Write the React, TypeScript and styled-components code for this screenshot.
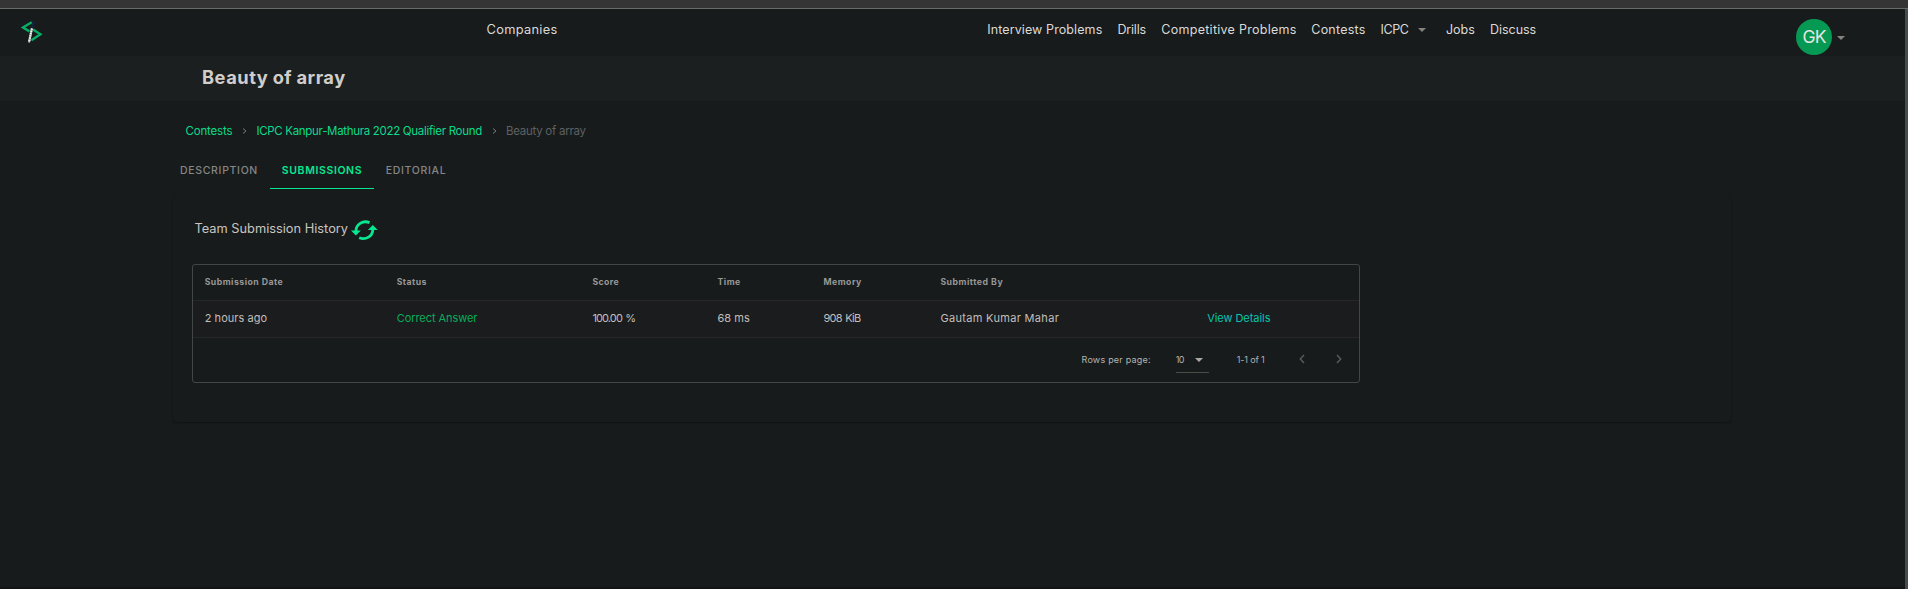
import React from 'react';
import styled, { createGlobalStyle } from 'styled-components';

const GlobalStyle = createGlobalStyle`
  *, *::before, *::after { box-sizing: border-box; }
  body {
    margin: 0;
    background: #171b1c;
    color: #c9c6c2;
    font-family: Inter, "Open Sans", sans-serif;
    overflow: hidden;
  }
`;

const Page = styled.div`
  height: 589px;
  display: grid;
  grid-template-columns: 1905px 3px;
  grid-template-rows: 9px 1fr 2px;
`;

const WindowEdge = styled.div`
  grid-column: 1 / -1;
  background: #353535;
  border-bottom: 1px solid #696b69;
`;

const BottomEdge = styled.div`
  grid-column: 1 / 2;
  background: #121516;
`;

const Scrollbar = styled.div`
  grid-row: 2 / 4;
  grid-column: 2;
  background: #474b4f;
`;

const Main = styled.main`
  min-width: 0;
`;

const Header = styled.header`
  height: 47px;
  display: flex;
  align-items: flex-start;
  padding-left: 20px;
`;

const Logo = styled.svg`
  margin-top: 11px;
  flex: none;
`;

const Label = styled.span<{ $ls?: number }>`
  letter-spacing: ${p => p.$ls ?? 0}px;
  white-space: nowrap;
`;

const NavSlot = styled.div<{ $width: number }>`
  flex: none;
  width: ${p => p.$width}px;
  display: flex;
  align-items: center;
  height: 41px;
  font-size: 12.5px;
  color: #dcdad6;
`;

const CompaniesSlot = styled(NavSlot)`
  padding-left: 442.5px;
  font-size: 12.8px;
`;

const Nav = styled.nav`
  display: flex;
  flex: none;
`;

const Caret = styled.i<{ $gap: number; $color?: string }>`
  margin-left: ${p => p.$gap}px;
  margin-top: 1px;
  border: 4px solid transparent;
  border-top-color: ${p => p.$color ?? '#84827e'};
  border-bottom: 0;
`;

const Account = styled.div`
  display: flex;
  align-items: center;
  margin-top: 10px;
`;

const Avatar = styled.div`
  width: 36px;
  height: 36px;
  padding-bottom: 1px;
  border-radius: 50%;
  background: #069953;
  color: #e4e6e2;
  font-size: 17.5px;
  font-weight: 400;
  display: flex;
  align-items: center;
  justify-content: center;
`;

const TitleBar = styled.div`
  height: 45px;
  padding: 0 0 4px 202px;
  background: #1b1f20;
  display: flex;
  align-items: center;
`;

const Title = styled.h1`
  margin: 0;
  font-size: 18.3px;
  line-height: 22px;
  font-weight: 700;
  letter-spacing: 0.52px;
  word-spacing: -0.6px;
  color: #d0cdca;
`;

const Breadcrumb = styled.div`
  height: 20px;
  margin-top: 20px;
  padding-left: 185.5px;
  display: flex;
  align-items: center;
  font-size: 11.5px;
  color: #5f6262;
`;

const Crumb = styled.a<{ $ls: number }>`
  color: #0bdb8c;
  letter-spacing: ${p => p.$ls}px;
`;

const CrumbArrow = styled.svg`
  margin: 0 9px 0 10px;
`;

const Tabs = styled.div`
  display: flex;
  height: 38px;
  margin: 10px 0 0 168px;
`;

const Tab = styled.div<{ $width: number; $active?: boolean }>`
  width: ${p => p.$width}px;
  height: 38px;
  padding-top: 2px;
  display: flex;
  align-items: center;
  justify-content: center;
  font-size: 10.5px;
  font-weight: ${p => (p.$active ? 600 : 500)};
  letter-spacing: ${p => (p.$active ? 0.62 : 0.68)}px;
  color: ${p => (p.$active ? '#07e791' : '#858686')};
  border-bottom: 1px solid ${p => (p.$active ? '#07e791' : 'transparent')};
`;

const Card = styled.section`
  width: 1558px;
  height: 226px;
  margin: 7px 0 0 173px;
  padding: 22px 0 0 19px;
  border-radius: 4px;
  background: #171b1c;
  box-shadow: 0 1px 2px rgba(0, 0, 0, 0.35);
`;

const CardTitle = styled.div`
  display: flex;
  align-items: center;
  height: 24px;
  padding-left: 2.5px;
  margin-bottom: 22px;
  font-size: 12.8px;
`;

const CardTitleText = styled(Label)`
  padding-bottom: 3px;
`;

const Refresh = styled.svg`
  margin: 0 0 0 2.5px;
`;

const Table = styled.div`
  width: 1168px;
  height: 119px;
  border: 1px solid #424646;
  border-radius: 3px;
`;

const Row = styled.div<{ $head?: boolean }>`
  display: grid;
  grid-template-columns: 192px 195.7px 125px 106px 117px 266.8px 1fr;
  align-items: center;
  height: ${p => (p.$head ? 36 : 37)}px;
  padding: 0 0 2px 11.7px;
  border-bottom: 1px solid #262828;
  background: ${p => (p.$head ? 'transparent' : '#1b1c1e')};
  color: ${p => (p.$head ? '#999795' : '#c1bfbc')};
  font-size: ${p => (p.$head ? 8.7 : 11)}px;
  font-weight: ${p => (p.$head ? 700 : 400)};
`;

const Cell = styled.div<{ $ls: number; $color?: string }>`
  letter-spacing: ${p => p.$ls}px;
  word-spacing: ${p => (p.$ls < -0.4 ? 1 : 0)}px;
  color: ${p => p.$color ?? 'inherit'};
  white-space: nowrap;
`;

const Footer = styled.div`
  height: 42px;
  display: flex;
  align-items: center;
  padding-left: 888.5px;
  font-size: 9px;
  color: #b5b3b0;
`;

const PageSize = styled.div`
  width: 33px;
  height: 26px;
  margin: 1px 0 0 25px;
  border-bottom: 1px solid #4c4d46;
  display: flex;
  align-items: center;
`;

const Range = styled.div`
  width: 62px;
  margin-left: 28px;
  letter-spacing: -0.15px;
`;

const Arrows = styled.div`
  display: flex;
  gap: 31px;
`;

const headings: [string, number][] = [
  ['Submission Date', 0.48], ['Status', 0.45], ['Score', 0.4], ['Time', 0.55],
  ['Memory', 0.5], ['Submitted By', 0.52], ['', 0],
];

const submission: [string, number, string?][] = [
  ['2 hours ago', 0.05], ['Correct Answer', -0.06, '#08ad5c'], ['100.00 %', -0.87], ['68 ms', 0.05],
  ['908 KiB', -0.7], ['Gautam Kumar Mahar', 0.32], ['View Details', -0.05, '#06c5af'],
];

const links: [string, number, number][] = [
  ['Interview Problems', 130.2, 0.1], ['Drills', 43.8, -0.2], ['Competitive Problems', 150, 0.28],
  ['Contests', 69.3, 0.22], ['ICPC', 65.3, -0.4], ['Jobs', 44.2, 0.05], ['Discuss', 306, -0.05],
];

const Chevron = ({ left = false }: { left?: boolean }) => (
  <svg width="6" height="10" viewBox="0 0 6 10" fill="none" stroke="#5a5d5d" strokeWidth="1.4">
    <path d={left ? 'M5 1 1.3 5 5 9' : 'M1 1 4.7 5 1 9'} />
  </svg>
);

const Separator = () => (
  <CrumbArrow width="5" height="6" viewBox="0 0 5 6" fill="none" stroke="#777979" strokeWidth="1">
    <path d="M1 .5 4 3 1 5.5" />
  </CrumbArrow>
);

export default function App() {
  return (
    <Page>
      <GlobalStyle />
      <WindowEdge />
      <Main>
        <Header>
          <Logo width="24" height="24" viewBox="0 0 24 24" fill="none">
            <path d="M11.7 2.3 3 7.5l6.5 3.9M13 9.6l7.4 4.7-9 5.9" stroke="#07ae65" strokeWidth="2.4" />
            <path d="M13.6 1.5 12.2 8.5" stroke="#122342" strokeWidth="2.6" />
            <path d="M11.9 8.5 9 22.3" stroke="#a8b8b1" strokeWidth="2.1" />
            <path d="M11.9 8.5 9 22.3" stroke="#f3f7f5" strokeWidth="2.1" strokeDasharray="1.2 1.1" />
          </Logo>
          <CompaniesSlot $width={943.3}>
            <Label $ls={0.32}>Companies</Label>
          </CompaniesSlot>
          <Nav>
            {links.map(([text, width, ls]) => (
              <NavSlot key={text} $width={width}>
                <Label $ls={ls}>{text}</Label>
                {text === 'ICPC' && <Caret $gap={9.5} />}
              </NavSlot>
            ))}
          </Nav>
          <Account>
            <Avatar><Label $ls={-0.8}>GK</Label></Avatar>
            <Caret $gap={5} />
          </Account>
        </Header>
        <TitleBar><Title>Beauty of array</Title></TitleBar>
        <Breadcrumb>
          <Crumb $ls={-0.17}>Contests</Crumb>
          <Separator />
          <Crumb $ls={-0.31}>ICPC Kanpur-Mathura 2022 Qualifier Round</Crumb>
          <Separator />
          <Label $ls={-0.26}>Beauty of array</Label>
        </Breadcrumb>
        <Tabs>
          <Tab $width={102}>DESCRIPTION</Tab>
          <Tab $width={104} $active>SUBMISSIONS</Tab>
          <Tab $width={84}>EDITORIAL</Tab>
        </Tabs>
        <Card>
          <CardTitle>
            <CardTitleText $ls={0}>Team Submission History</CardTitleText>
            <Refresh width="27" height="21" viewBox="0 0 27 21">
              <path d="M4.9 11C4.9 4.5 11.8-.1 18.5 2.6M21.8 9.5c0 6.5-6.9 11-13.6 8.3" fill="none" stroke="#07e791" strokeWidth="2.8" />
              <path d="M0 10.4h9.8l-4.9 5.2zM16.9 10.1h9.8L21.8 4.9z" fill="#07e791" />
            </Refresh>
          </CardTitle>
          <Table>
            <Row $head>
              {headings.map(([text, ls], i) => <Cell key={i} $ls={ls}>{text}</Cell>)}
            </Row>
            <Row>
              {submission.map(([text, ls, color]) => <Cell key={text} $ls={ls} $color={color}>{text}</Cell>)}
            </Row>
            <Footer>
              <Label $ls={0.22}>Rows per page:</Label>
              <PageSize>
                <Label $ls={-0.6}>10</Label>
                <Caret $gap={11.5} $color="#aaa8a4" />
              </PageSize>
              <Range>1-1 of 1</Range>
              <Arrows><Chevron left /><Chevron /></Arrows>
            </Footer>
          </Table>
        </Card>
      </Main>
      <Scrollbar />
      <BottomEdge />
    </Page>
  );
}
